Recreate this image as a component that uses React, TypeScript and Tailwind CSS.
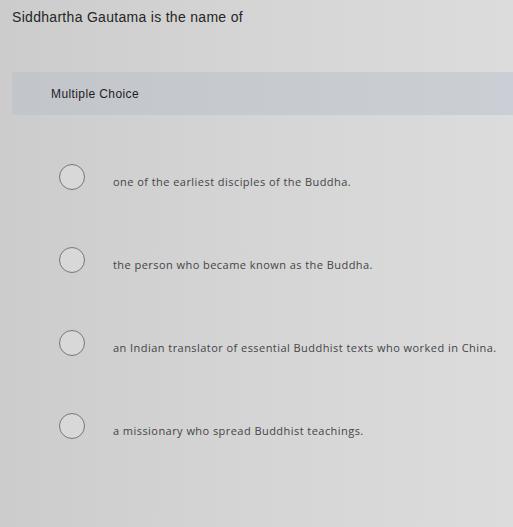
const choices = [
  "one of the earliest disciples of the Buddha.",
  "the person who became known as the Buddha.",
  "an Indian translator of essential Buddhist texts who worked in China.",
  "a missionary who spread Buddhist teachings.",
];

export default function App() {
  return (
    <div
      className="min-h-[527px] w-full bg-linear-to-r from-[#cbcccb] via-[#d4d5d4] to-[#dcdcdc] pl-[12px] pt-[7px] text-[#2a2a2a]"
      style={{ fontFamily: '"Liberation Sans", Arial, sans-serif' }}
    >
      {/* Question prompt */}
      <h1 className="text-[14px] leading-[20px] tracking-[0.3px] text-[#262626]">
        Siddhartha Gautama is the name of
      </h1>

      {/* Question type header */}
      <div className="mt-[45px] flex h-[43px] items-center bg-linear-to-r from-[#c2c6ca] to-[#cbced4] pl-[39px]">
        <span className="text-[12px] tracking-[0.4px] text-[#1f2024]">Multiple Choice</span>
      </div>

      {/* Answer options */}
      <ul className="mt-[49px] pl-[47px]">
        {choices.map((text, i) => (
          <li key={i} className="flex h-[83px] items-start">
            <span className="h-[26px] w-[26px] shrink-0 rounded-full border-[1.5px] border-[#767778] bg-[#d7d8d7]" />
            <span className="ml-[28px] mt-[11px] font-['Open_Sans',sans-serif] text-[11px] leading-[14px] tracking-[0.45px] text-[#444546]">
              {text}
            </span>
          </li>
        ))}
      </ul>
    </div>
  );
}
